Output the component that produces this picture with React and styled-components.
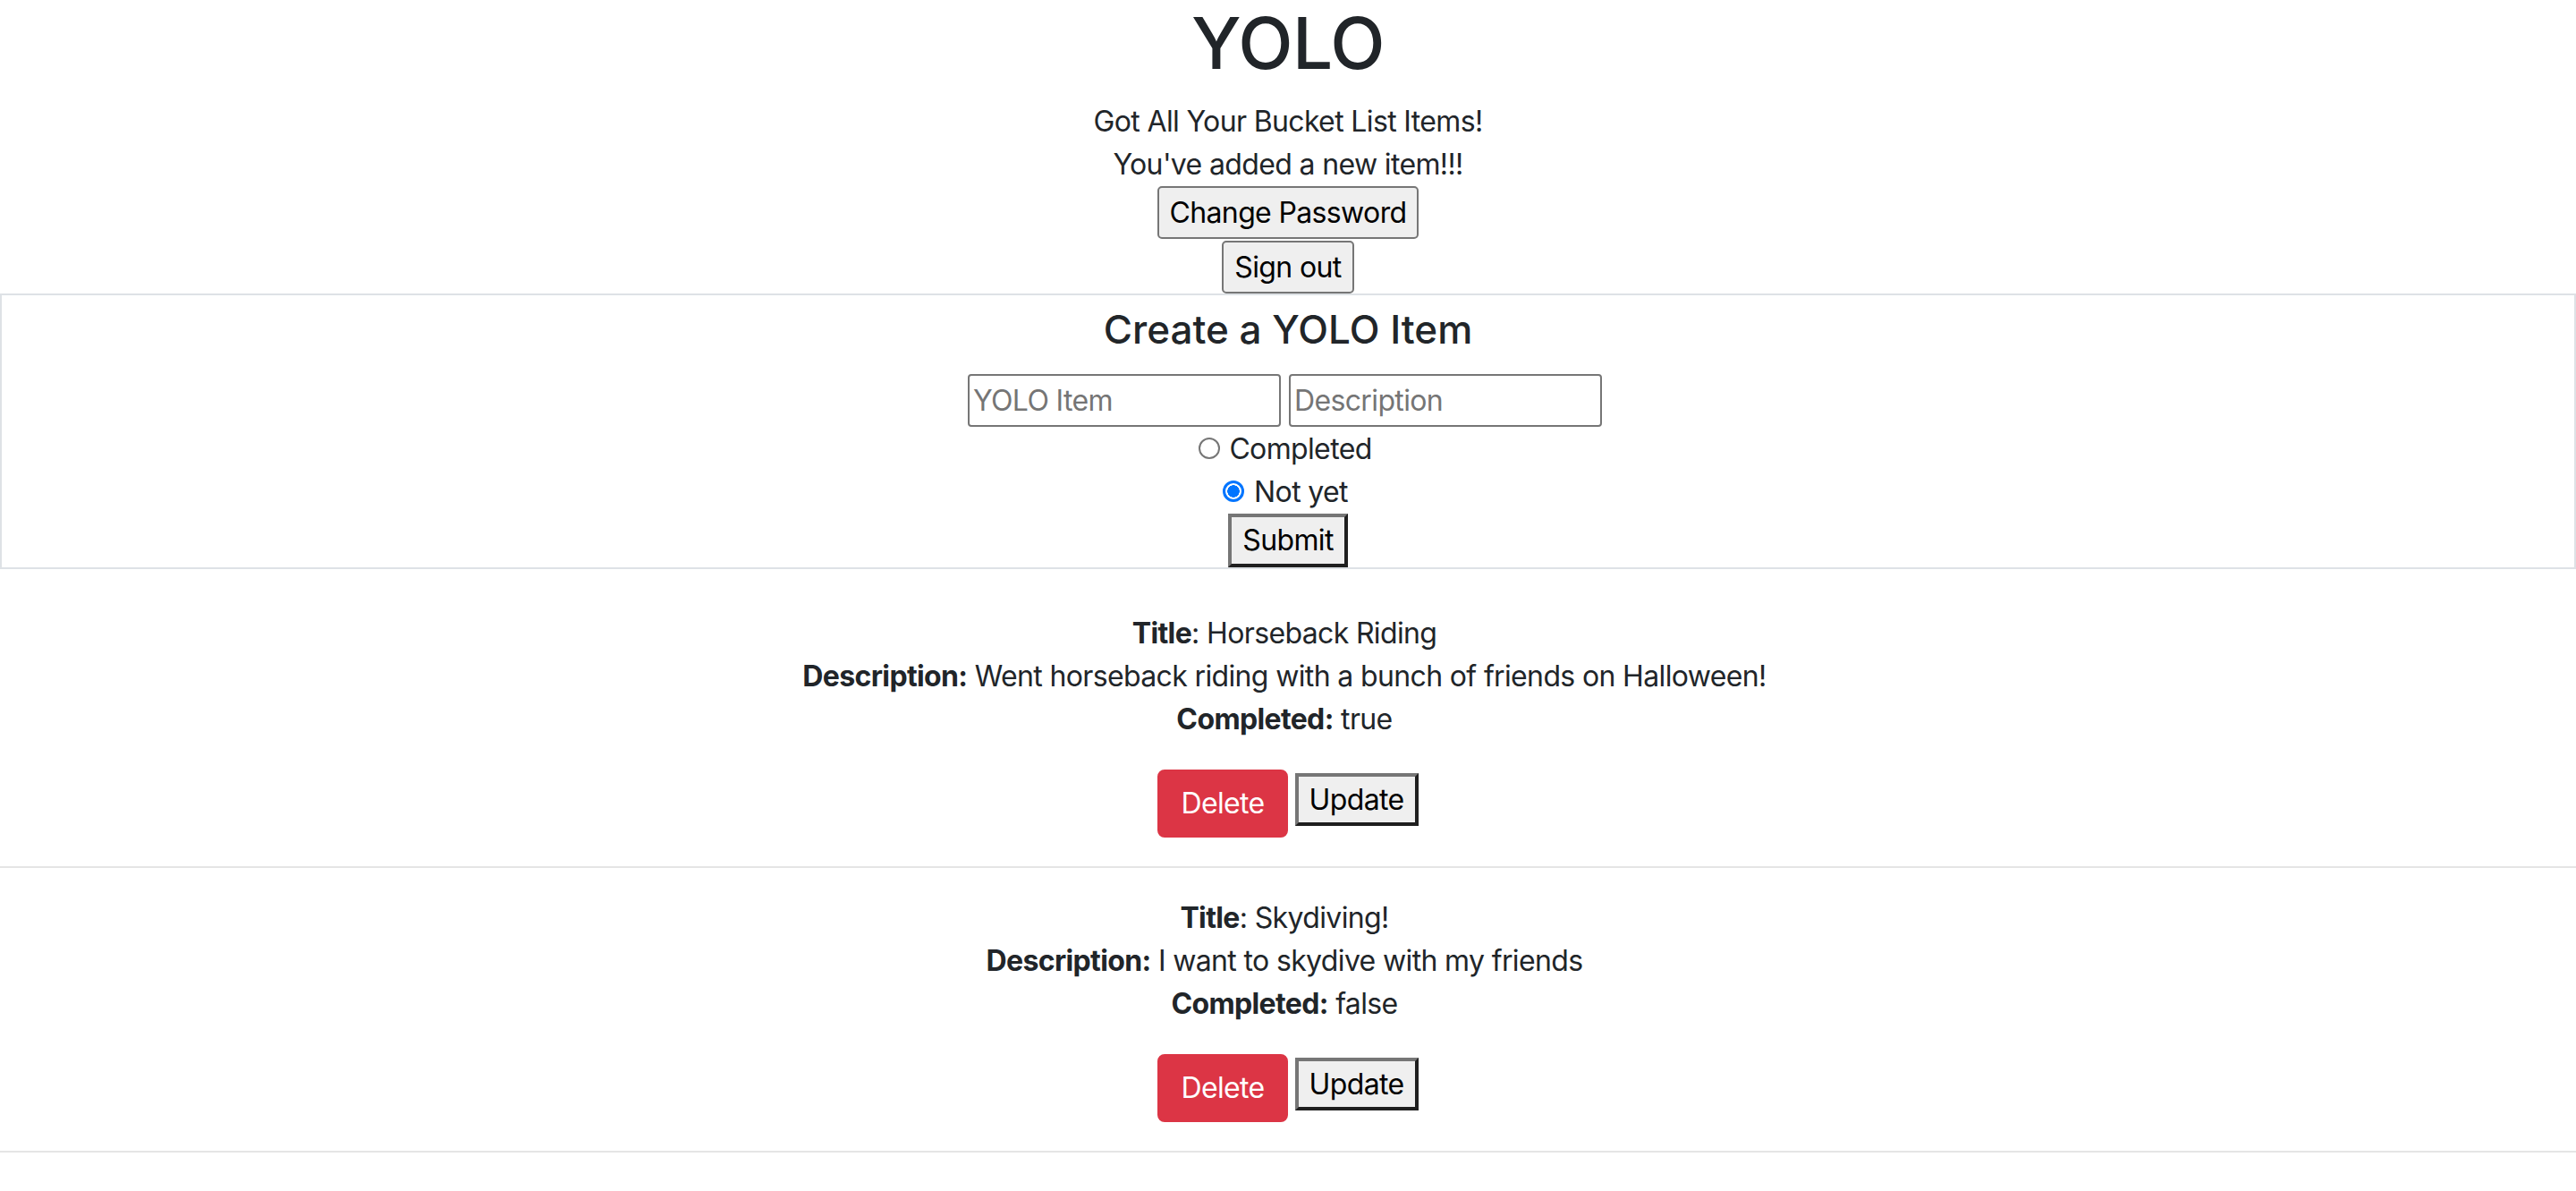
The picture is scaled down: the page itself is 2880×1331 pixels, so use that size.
import React from "react";
import styled, { createGlobalStyle } from "styled-components";

const GlobalStyle = createGlobalStyle`
  html, body { margin: 0; padding: 0; background: #fff; }
  body {
    font-family: Inter, "Noto Sans", "Liberation Sans", sans-serif;
    font-size: 32px;
    line-height: 1.5;
    letter-spacing: -0.02em;
    color: #212529;
  }
  * { box-sizing: border-box; }
`;

const Page = styled.div`
  display: flex;
  flex-direction: column;
  width: 100%;
`;

const Header = styled.header`
  display: flex;
  flex-direction: column;
  align-items: center;
`;

const AppTitle = styled.h1`
  margin: 0 0 16px;
  font-size: 80px;
  font-weight: 500;
  line-height: 1.2;
  height: 96px;
`;

const Message = styled.div`
  height: 48px;
  line-height: 48px;
  font-size: 32px;
`;

const ButtonStack = styled.div`
  display: flex;
  flex-direction: column;
  align-items: center;
  gap: 2px;
`;

const NativeButton = styled.button`
  height: 59px;
  padding: 0 12px;
  font-family: inherit;
  font-size: 32px;
  letter-spacing: -0.02em;
  line-height: 1;
  color: #000;
  background: #efefef;
  border: 2px solid #767676;
  border-radius: 5px;
  cursor: pointer;
`;

const FormBox = styled.form`
  display: flex;
  flex-direction: column;
  align-items: center;
  width: 100%;
  border: 2px solid #dee2e6;
  margin: 0;
`;

const FormTitle = styled.h4`
  margin: 12px 0 24px;
  font-size: 44px;
  font-weight: 500;
  letter-spacing: 0;
  line-height: 52px;
  height: 52px;
`;

const InputRow = styled.div`
  display: flex;
  gap: 9px;
  height: 60px;
  align-items: flex-start;
  padding-right: 7px;
`;

const TextInput = styled.input`
  width: 350px;
  height: 59px;
  padding: 2px 4px;
  font-family: inherit;
  font-size: 32px;
  letter-spacing: -0.02em;
  color: #000;
  border: 2px solid #767676;
  border-radius: 4px;
  outline: none;
  &::placeholder { color: #757575; }
`;

const RadioRow = styled.label`
  display: flex;
  align-items: center;
  gap: ${(p) => p.$gap}px;
  height: 48px;
  padding-right: ${(p) => p.$shift}px;
  font-size: 32px;
  line-height: 48px;
`;

const Radio = styled.input.attrs({ type: "radio" })`
  appearance: none;
  -webkit-appearance: none;
  width: 24px;
  height: 24px;
  margin: 0 0 3px;
  border: 2px solid #767676;
  border-radius: 50%;
  background: #fff;
  &:checked {
    border: 3px solid #0075ff;
    background: radial-gradient(circle, #0075ff 0 6.5px, #fff 7px);
  }
`;

const OutsetButton = styled.button`
  height: ${(p) => p.$h}px;
  margin-top: ${(p) => p.$offset}px;
  padding: 0 12px;
  font-family: inherit;
  font-size: 32px;
  letter-spacing: -0.02em;
  line-height: 1;
  color: #000;
  background: #efefef;
  border-width: 4px;
  border-style: solid;
  border-color: #767676 #1f1f1f #1f1f1f #767676;
  border-radius: 0;
  cursor: pointer;
`;

const ItemList = styled.section`
  display: flex;
  flex-direction: column;
  padding-top: 48px;
`;

const ItemCard = styled.article`
  display: flex;
  flex-direction: column;
  align-items: center;
`;

const FieldLine = styled.div`
  height: 48px;
  line-height: 48px;
  font-size: 32px;
  padding-right: 8px;
  margin-bottom: ${(p) => (p.$last ? 32 : 0)}px;
`;

const Label = styled.strong`
  font-weight: 700;
`;

const ActionRow = styled.div`
  display: flex;
  align-items: flex-start;
  gap: 8px;
`;

const DangerButton = styled.button`
  height: 76px;
  padding: 12px 24px;
  font-family: inherit;
  font-size: 32px;
  letter-spacing: -0.02em;
  line-height: 48px;
  color: #fff;
  background: #dc3545;
  border: 2px solid #dc3545;
  border-radius: 8px;
  cursor: pointer;
`;

const Divider = styled.hr`
  width: 100%;
  margin: 32px 0;
  border: 0;
  border-top: 2px solid rgba(0, 0, 0, 0.1);
`;

const items = [
  {
    id: 1,
    title: "Horseback Riding",
    description: "Went horseback riding with a bunch of friends on Halloween!",
    completed: "true",
  },
  {
    id: 2,
    title: "Skydiving!",
    description: "I want to skydive with my friends",
    completed: "false",
  },
];

export default function App() {
  return (
    <Page>
      <GlobalStyle />
      <Header>
        <AppTitle>YOLO</AppTitle>
        <Message>Got All Your Bucket List Items!</Message>
        <Message>You've added a new item!!!</Message>
        <ButtonStack>
          <NativeButton type="button">Change Password</NativeButton>
          <NativeButton type="button">Sign out</NativeButton>
        </ButtonStack>
      </Header>

      <FormBox onSubmit={(e) => e.preventDefault()}>
        <FormTitle>Create a YOLO Item</FormTitle>
        <InputRow>
          <TextInput placeholder="YOLO Item" />
          <TextInput placeholder="Description" />
        </InputRow>
        <RadioRow $gap={10} $shift={6}>
          <Radio name="completed" value="true" />
          Completed
        </RadioRow>
        <RadioRow $gap={11} $shift={6}>
          <Radio name="completed" value="false" defaultChecked />
          Not yet
        </RadioRow>
        <OutsetButton type="submit" $h={60} $offset={0}>
          Submit
        </OutsetButton>
      </FormBox>

      <ItemList>
        {items.map((item) => (
          <ItemCard key={item.id}>
            <FieldLine>
              <Label>Title</Label>: {item.title}
            </FieldLine>
            <FieldLine>
              <Label>Description:</Label> {item.description}
            </FieldLine>
            <FieldLine $last>
              <Label>Completed:</Label> {item.completed}
            </FieldLine>
            <ActionRow>
              <DangerButton type="button">Delete</DangerButton>
              <OutsetButton type="button" $h={59} $offset={4}>
                Update
              </OutsetButton>
            </ActionRow>
            <Divider />
          </ItemCard>
        ))}
      </ItemList>
    </Page>
  );
}
